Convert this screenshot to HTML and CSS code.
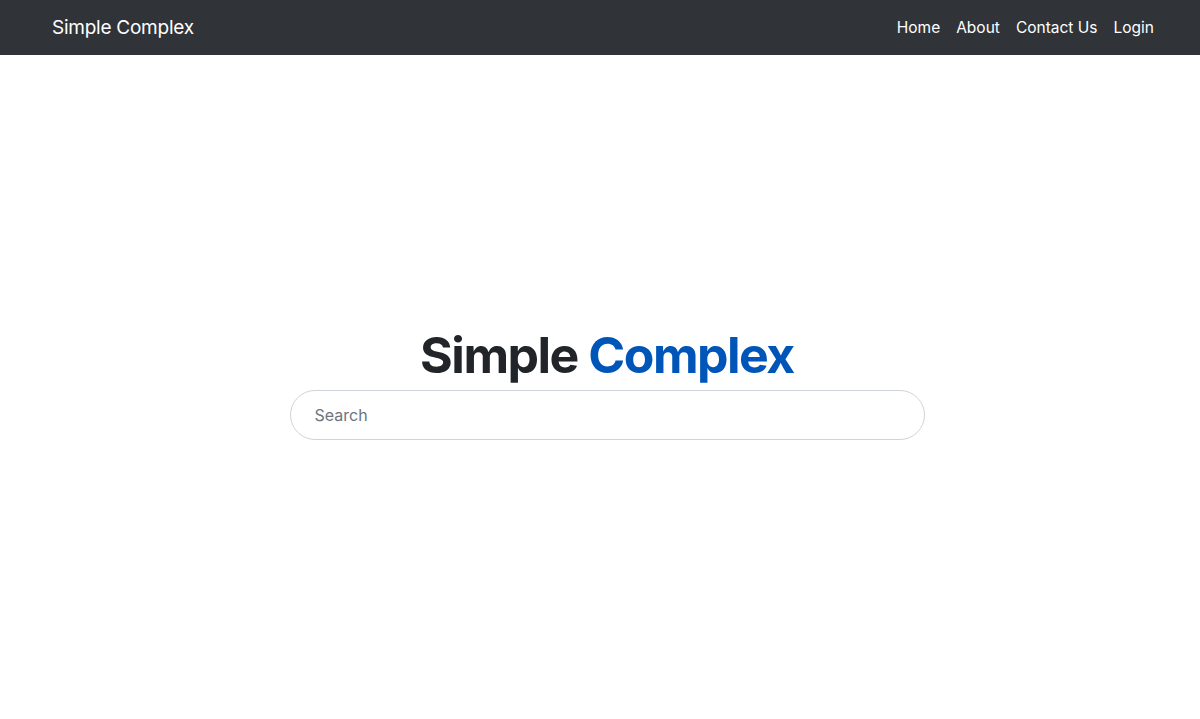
FILE: index.html
```
<!DOCTYPE html>
<html lang="en">
<head>
<meta charset="utf-8">
<title>Simple Complex</title>
<link rel="stylesheet" href="styles.css">
</head>
<body>
<nav class="navbar">
  <a class="brand" href="#">Simple Complex</a>
  <ul class="nav-links">
    <li><a href="#">Home</a></li>
    <li><a href="#">About</a></li>
    <li><a href="#">Contact Us</a></li>
    <li><a href="#">Login</a></li>
  </ul>
</nav>
<main class="hero">
  <h1 class="title">Simple <span class="accent">Complex</span></h1>
  <input class="search" type="text" placeholder="Search">
</main>
</body>
</html>
```
FILE: styles.css
```
* { box-sizing: border-box; }
html, body { margin: 0; height: 100%; }
body {
  font-family: Inter, "Liberation Sans", sans-serif;
  color: #212529;
  background: #fff;
  display: flex;
  flex-direction: column;
}
.navbar {
  height: 55px;
  background: #303438;
  display: flex;
  align-items: center;
  justify-content: space-between;
  padding: 0 46px 0 52px;
  flex-shrink: 0;
}
.brand {
  color: #fff;
  text-decoration: none;
  font-size: 19px;
  letter-spacing: -0.25px;
  line-height: 1;
  margin-top: -1px;
}
.nav-links {
  list-style: none;
  display: flex;
  gap: 16px;
  margin: 0;
  padding: 0;
}
.nav-links a {
  color: #fff;
  text-decoration: none;
  font-size: 15.5px;
  letter-spacing: 0;
  line-height: 1;
  display: block;
  margin-top: 0;
}
.hero {
  flex: 1;
  display: flex;
  flex-direction: column;
  align-items: center;
  justify-content: center;
  padding: 0 0 9px 14px;
}
.title {
  margin: 0 0 5px;
  font-size: 50px;
  font-weight: 700;
  line-height: 60px;
  letter-spacing: -1.5px;
}
.accent { color: #0056b8; }
.search {
  width: 635px;
  height: 50px;
  border: 1px solid #ced4da;
  border-radius: 25px;
  padding: 0 24px;
  font-family: inherit;
  font-size: 16px;
  color: #495057;
  outline: none;
}
.search::placeholder { color: #6c757d; }
```
